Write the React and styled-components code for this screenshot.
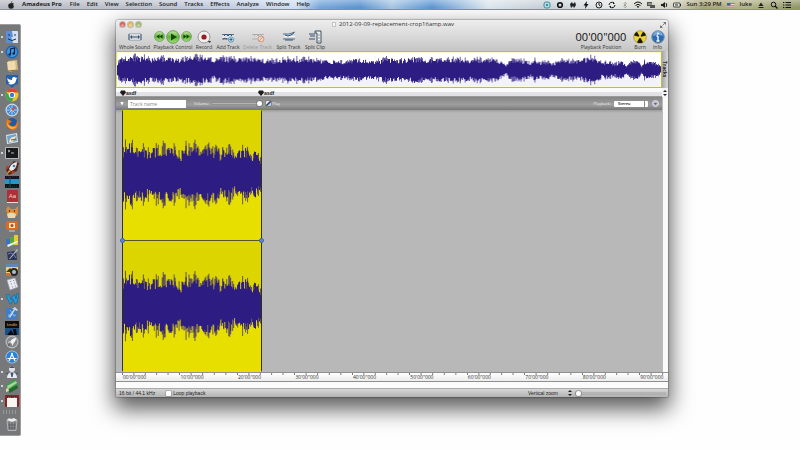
import React, { useState } from 'react';
import styled, { createGlobalStyle } from 'styled-components';

const INK = '#2d1c82';

// small seeded generator so the waves look the same on every load
const seeded = (seed) => {
  let s = seed;
  return () => {
    s = (s * 16807) % 2147483647;
    return s / 2147483647;
  };
};

const envelopeAt = (points, t) => {
  for (let i = 1; i < points.length; i++) {
    if (t <= points[i][0]) {
      const [x0, y0] = points[i - 1];
      const [x1, y1] = points[i];
      return y0 + ((y1 - y0) * (t - x0)) / (x1 - x0);
    }
  }
  return points[points.length - 1][1];
};

const buildWave = (points, width, middle, seed) => {
  const rand = seeded(seed);
  let core = '';
  let peaks = '';
  for (let x = 0; x < width; x++) {
    const env = envelopeAt(points, x);
    const a = env * (0.6 + rand() * 0.38);
    const b = env * (0.6 + rand() * 0.38);
    core += `M${x} ${(middle - a).toFixed(1)}h1V${(middle + b).toFixed(1)}h-1z`;
    if (rand() > 0.5) {
      const p = env * (0.85 + rand() * 0.35);
      peaks += `M${x} ${(middle - p).toFixed(1)}h1V${(middle + p).toFixed(1)}h-1z`;
    }
  }
  return { core, peaks };
};

const overviewPoints = [
  [0, 8], [4, 12], [20, 14], [36, 12], [50, 13], [63, 11], [75, 14], [92, 13], [97, 9], [104, 13],
  [118, 12], [140, 12], [155, 10], [175, 12], [200, 11], [222, 9], [232, 9], [240, 12], [258, 9],
  [270, 12], [285, 11], [298, 13], [310, 11], [335, 12], [360, 11], [380, 12], [386, 8], [390, 4],
  [394, 10], [410, 10], [415, 7], [419, 12], [425, 8], [432, 9], [436, 5], [441, 10], [460, 10],
  [475, 13], [483, 12], [486, 7], [492, 9], [499, 6], [507, 10], [511, 4], [515, 9], [522, 9],
  [526, 4], [529, 9], [538, 8], [543, 6], [546, 3],
];

const clipPoints = [
  [0, 28], [3, 31], [10, 33], [14, 24], [18, 30], [25, 23], [30, 28], [45, 29], [53, 26], [57, 20],
  [61, 30], [75, 29], [84, 28], [96, 27], [98, 16], [99, 30], [102, 24], [108, 26], [112, 18],
  [117, 26], [125, 28], [128, 18], [132, 25], [137, 18], [139, 13],
];

const Wave = ({ points, width, height, middle, seed }) => {
  const { core, peaks } = buildWave(points, width, middle, seed);
  return (
    <WaveSvg viewBox={`0 0 ${width} ${height}`} preserveAspectRatio="none" aria-hidden="true">
      <path d={peaks} fill={INK} opacity="0.7" />
      <path d={core} fill={INK} />
    </WaveSvg>
  );
};

const dockApps = [
  { name: 'Finder', running: true, art: <><rect x="1" y="1" width="12" height="12" rx="1" fill="#5b8fd8" /><path d="M7 1h5a1 1 0 0 1 1 1v11H8C7 10 6.500 9 6.500 7H8z" fill="#d4e0ef" /><path d="M4 4v2M10 4v2M3 9q4 3 8 0" stroke="#16305e" fill="none" /></> },
  { name: 'iTunes', running: true, art: <><circle cx="7" cy="7" r="6.500" fill="#1d66b4" /><circle cx="7" cy="7" r="5" fill="#3f98e0" /><path d="M5.500 9.500V4l4-1v5.500" stroke="#0c2447" fill="none" strokeWidth="1.200" /><circle cx="4.700" cy="9.500" r="1.300" fill="#0c2447" /><circle cx="8.700" cy="8.500" r="1.300" fill="#0c2447" /></> },
  { name: 'Notes', art: <><path d="M3 2l9-1 1 10-9 2z" fill="#d8b981" /><path d="M2 3l8-1 1 9-8 1z" fill="#f0dcae" /><path d="M3 12l9-1" stroke="#8f6d35" /></> },
  { name: 'Twitter', art: <><path d="M1 1h12v9l-3 1-3 3-3-3-3-1z" fill="#2461a8" /><path d="M2 4q2 2 5 2 0-3 2-3 1.500 0 2 1l1.500-.5-1.200 1.700Q11 10 6.500 10.500 4 10.500 3 9.500q2 0 2-.7Q3 8 3 7z" fill="#fff" /></> },
  { name: 'Chrome', running: true, art: <><circle cx="7" cy="7" r="6.500" fill="#efc52d" /><path d="M1.300 3.800A6.500 6.500 0 0 1 13 4.500H7z" fill="#dc4536" /><path d="M1.300 3.800A6.500 6.500 0 0 0 7 13.500L9 9 5 9z" fill="#41a652" /><circle cx="7" cy="7" r="3" fill="#fff" /><circle cx="7" cy="7" r="2.200" fill="#3d79d2" /></> },
  { name: 'Safari', art: <><circle cx="7" cy="7" r="6.500" fill="#cfd8e2" /><circle cx="7" cy="7" r="5.300" fill="#3f8bd6" /><path d="M7 2v10M2 7h10M3.500 3.500l7 7M10.500 3.500l-7 7" stroke="#d5e9fb" strokeWidth=".7" /><path d="M11 3L8 8 6 6z" fill="#d8483a" /></> },
  { name: 'Firefox', art: <><circle cx="7" cy="7" r="6" fill="#2358a3" /><path d="M2 2Q0 7 2 10q3 4 7 3 5-2 4-8l-1-2q0 5-3 6-4 1-5-3l3-1Q5 3 2 2z" fill="#e8781f" /><path d="M2 5q0 5 4 7 4 0 6-3-4 2-7 0Q3 8 2 5z" fill="#f7b532" /></> },
  { name: 'Mail', art: <><path d="M1 3l11-2 1 9-11 2z" fill="#dfe6ec" /><path d="M2 4l9-2 1 7-9 2z" fill="#6da0cf" /><path d="M4 10Q5 5 8 5l3-1-1 3-3 3z" fill="#f0e5bd" /><path d="M6 8l5-1" stroke="#845c35" /></> },
  { name: 'Terminal', running: true, art: <><rect x="0" y="1" width="14" height="12" rx="1" fill="#b6b9bb" /><rect x="1" y="2" width="12" height="10" fill="#17191b" /><path d="M3 4l2 1-2 1M6 7h3" stroke="#e4e4e4" fill="none" strokeWidth=".8" /></> },
  { name: 'Rocket', art: <><path d="M1 9L9 0l5 2-2 8-8 4z" fill="#54261c" /><path d="M12 1Q6 2 4 8l2 2q6-2 6-9z" fill="#eee" /><path d="M4 7L0 8l3-4zM7 10l-1 4 4-4z" fill="#ba3828" /><path d="M4 9l2 1-5 4z" fill="#f08d26" /><circle cx="9" cy="5" r="1.300" fill="#427cb7" /></> },
  { name: 'Movies', art: <><rect y="1" width="14" height="12" fill="#10151b" /><rect y="4" width="14" height="5" fill="#2596c6" /><path d="M5 2v10" stroke="#134d6b" /><path d="M1 2h12M1 12h12" stroke="#2b3238" strokeDasharray="1 1" /></> },
  { name: 'Dictionary', art: <><rect x="2" y="0" width="11" height="13" rx="1" fill="#ac3036" /><path d="M2 12.500h11" stroke="#ecdcd5" /><text x="7.500" y="8" fontSize="6" fontFamily="Liberation Sans, sans-serif" textAnchor="middle" fill="#f3d8ca">Aa</text></> },
  { name: 'Growl', art: <><path d="M1 5l2-4 3 3h4l3-3v7q0 4-6 4-6 0-5-4z" fill="#d78c3a" /><path d="M2 9q4-3 9 0l-1 4H3z" fill="#edd8a6" /><path d="M4 6h1M9 6h1" stroke="#372010" strokeWidth="1.500" /></> },
  { name: 'Library', art: <><rect x="1" y="2" width="12" height="9" rx="1" fill="#d66d26" /><rect x="4" y="4" width="6" height="5" fill="#f3e4c6" /><circle cx="7" cy="6.500" r="1.500" fill="#b14a16" /><path d="M4 12h6" stroke="#d8cdbc" /></> },
  { name: 'Numbers', art: <><path d="M1 5h4v7H1z" fill="#3b73be" /><path d="M5 3h4v9H5z" fill="#55a83e" /><path d="M9 1h4v10H9z" fill="#e8ca32" /><path d="M2 11L12 7l1 1-10 5z" fill="#f4f4f4" /></> },
  { name: 'Inkwell', art: <><path d="M2 4l9-1 1 9H3z" fill="#2c3555" /><path d="M4 11L12 1l1 1-8 9z" fill="#b9bed0" /><path d="M3 6q3-2 5 0t3 4" stroke="#7b84b6" fill="none" /></> },
  { name: 'iPhoto', art: <><rect x="1" y="1" width="12" height="9" fill="#f2cd73" /><path d="M1 1h12v3H1z" fill="#5e89b5" /><path d="M1 9l4-4 4 4z" fill="#463323" /><circle cx="9" cy="9" r="4" fill="#282628" /><circle cx="9" cy="9" r="2" fill="#b7b9d1" /><rect x="1" y="10" width="5" height="3" fill="#c4763a" /></> },
  { name: 'Dice', art: <><path d="M2 3l8-2 3 9-8 3z" fill="#e8e9f1" stroke="#a2a5b5" strokeWidth=".6" /><path d="M5 4.500h1M8 3.500h1M6 7h1M9 6h1M7 10h1M10 9h1" stroke="#8e93ad" strokeWidth="1.200" /></> },
  { name: 'Word', running: true, art: <path d="M1 3l3-1 2 6 2-5h2l1 4 1-6 2 1-2 9-2 1-2-5-2 5H5z" fill="#279cdb" stroke="#155783" strokeWidth=".5" /> },
  { name: 'Xcode', art: <><rect x="1" y="2" width="11" height="11" rx="1" fill="#3c7dc7" /><path d="M3 11L9 4M5 4l5 7M3 9h8" stroke="#8fbdec" strokeWidth=".8" /><path d="M7 3l3-2 3 3-1 1-2-1-5 8-1-1 5-8z" fill="#d4d8de" /></> },
  { name: 'Kindle', art: <><rect width="14" height="14" fill="#0b0d14" /><path d="M0 7h14v7H0z" fill="#1b4f85" /><path d="M2 14l4-5 3 5zM8 8h3l1 6H9z" fill="#050a12" /><text x="7" y="5" fontSize="4" fontFamily="Liberation Sans, sans-serif" textAnchor="middle" fill="#e3a63c">kindle</text></> },
  { name: 'Launchpad', art: <><circle cx="7" cy="7" r="6.500" fill="#b9bdc0" /><circle cx="7" cy="7" r="5.300" fill="#84898d" /><path d="M11 3Q7 3 5 7l2 2q4-2 4-6zM5 6L3 7l1 1zM7 9v2l2-3z" fill="#f2f3f3" /><path d="M4 9l1 1-2 1z" fill="#333" /></> },
  { name: 'App Store', art: <><circle cx="7" cy="7" r="6.500" fill="#aac9e8" /><circle cx="7" cy="7" r="5.700" fill="#2e80d1" /><path d="M4 11l3.500-8M10 11L6.500 3M2.500 8.500h9" stroke="#fff" strokeWidth="1.200" /></> },
  { name: 'Adium', running: true, art: <><path d="M2 13q0-5 5-6 5 1 5 6z" fill="#e8eaf0" /><circle cx="7" cy="4" r="3" fill="#dfe2ea" /><path d="M4 3q3-4 6 0" fill="#45516d" /><path d="M6 8l1 4 1-4zM3 9l-2-1M11 9l2-1" fill="#2f4473" stroke="#2f4473" strokeWidth=".8" /></> },
  { name: 'Textmate', running: true, art: <><path d="M1 6L10 0l3 6-9 7z" fill="#3e9c44" /><path d="M2 7l9-5 1 2-9 6z" fill="#a5d49d" /><path d="M3 11l9-5 1 3-8 5z" fill="#24682d" /><path d="M1 10l2-1 1 3-3 1z" fill="#e4d9ae" /></> },
  { name: 'Amadeus Pro', running: true, art: <><rect x="0" y="1" width="14" height="12" rx="1" fill="#8c2025" /><path d="M2 4q2-1 5 0 3-1 5 0v9H2z" fill="#f8f5f2" /><path d="M2 3h10" stroke="#262626" strokeDasharray="1 1" /></> },
];

const menus = ['File', 'Edit', 'View', 'Selection', 'Sound', 'Tracks', 'Effects', 'Analyze', 'Window', 'Help'];
const ticks = ['00', '10', '20', '30', '40', '50', '60', '70', '80', '90'];

const MenuBar = () => (
  <TopBar>
    <MenuList>
      <AppleButton aria-label="Apple menu">
        <svg width="8" height="8" viewBox="0 0 8 8">
          <path d="M4 2.300Q5.500 1.500 6.800 2.600 5.400 4 7 5.300 6.200 7.900 5 7.700q-1-.5-2 0Q1.500 7.500 1.100 4.800 1.200 1.800 4 2.300zM4 1.900Q4 .5 5.300 0 5.400 1.500 4 1.900z" fill="#222" />
        </svg>
      </AppleButton>
      <MenuButton $strong>Amadeus Pro</MenuButton>
      {menus.map((m) => (
        <MenuButton key={m}>{m}</MenuButton>
      ))}
    </MenuList>
    <StatusList>
      <StatusIcon viewBox="0 0 8 8"><rect x="1" y="1" width="6" height="6" rx="2" fill="#b5dce2" stroke="#45909e" /><path d="M3 3h2v2H3z" fill="#45909e" /></StatusIcon>
      <StatusIcon viewBox="0 0 8 8"><circle cx="4" cy="4" r="2.300" fill="none" stroke="#111" strokeWidth="1.600" /></StatusIcon>
      <StatusIcon viewBox="0 0 8 8"><path d="M1 3l2-2 1 2 2-2 1 3-2 3-1-2-2 2z" fill="#222" /></StatusIcon>
      <StatusIcon viewBox="0 0 8 8"><path d="M5 0L1.500 4.500h2L3 8l3.500-5h-2z" fill="#111" /></StatusIcon>
      <StatusIcon viewBox="0 0 8 8"><circle cx="4" cy="4" r="3" fill="none" stroke="#222" /><path d="M4 2v2l1.500 1" stroke="#222" fill="none" /></StatusIcon>
      <StatusIcon viewBox="0 0 8 8"><path d="M1 4a3 3 0 0 1 5-2M7 4a3 3 0 0 1-5 2" stroke="#111" fill="none" /><path d="M5 1l2 2H5zM3 7L1 5h2z" fill="#111" /></StatusIcon>
      <StatusIcon viewBox="0 0 8 8"><path d="M2.500 2.500l3 3L4 7V1l1.500 1.500-3 3" stroke="#999" fill="none" strokeWidth=".7" /></StatusIcon>
      <StatusIcon viewBox="0 0 8 8"><path d="M0 3q4-4 8 0M1.500 4.500q2.500-2.500 5 0" stroke="#111" fill="none" /><path d="M2.700 5.600q1.300-1 2.600 0L4 7z" fill="#111" /></StatusIcon>
      <StatusIcon viewBox="0 0 8 8"><path d="M0 1h5v4H0zM3 4h5v3H3z" fill="#555" /><path d="M1 3h6" stroke="#ccc" /></StatusIcon>
      <StatusIcon viewBox="0 0 8 8"><path d="M1 3h1.500L5 1v6L2.500 5H1z" fill="#222" /><path d="M6 2q1.500 2 0 4" stroke="#222" fill="none" /></StatusIcon>
      <StatusIcon viewBox="0 0 8 8"><rect x=".5" y="2" width="6.500" height="4" rx=".5" fill="#eee" stroke="#222" strokeWidth=".8" /><path d="M2 4h3M7.500 3v2" stroke="#222" /></StatusIcon>
      <Clock>Sun 3:29 PM</Clock>
      <StatusIcon viewBox="0 0 8 8"><path d="M0 2h8v4.500H0z" fill="#eee" /><path d="M0 2.500h8M0 4.300h8M0 6h8" stroke="#c04a4a" strokeWidth=".8" /><path d="M0 2h3.500v2.500H0z" fill="#4b5c98" /></StatusIcon>
      <Clock>luke</Clock>
      <StatusIcon viewBox="0 0 8 8"><path d="M4 1.500L6.500 5h-5zM1.500 6h5v1h-5z" fill="#222" /></StatusIcon>
      <StatusIcon viewBox="0 0 8 8"><circle cx="3.500" cy="3.500" r="2.300" fill="none" stroke="#111" /><path d="M5 5l2.500 2.500" stroke="#111" strokeWidth="1.300" /></StatusIcon>
      <StatusIcon viewBox="0 0 8 8"><path d="M2.500 1.500H8M2.500 4H8M2.500 6.500H8M0 1.500h1.300M0 4h1.300M0 6.500h1.300" stroke="#111" /></StatusIcon>
    </StatusList>
  </TopBar>
);

const Dock = () => (
  <DockBar aria-label="Dock">
    {dockApps.map((app) => (
      <DockButton key={app.name} aria-label={app.name} $running={app.running}>
        <svg width="14" height="14" viewBox="0 0 14 14">{app.art}</svg>
      </DockButton>
    ))}
    <DockDivider />
    <DockButton aria-label="Trash">
      <svg width="14" height="14" viewBox="0 0 14 14">
        <path d="M2 3h10l-1 10.500H3z" fill="#8e9193" stroke="#c3c6c8" strokeWidth=".7" />
        <path d="M4 5l1 8M7 5v8M10 5l-1 8M3 8h8M3 11h8" stroke="#54585a" strokeWidth=".7" />
        <path d="M2 3q2-3 4-1l3-1 3 2-5 2z" fill="#eceded" />
      </svg>
    </DockButton>
  </DockBar>
);

const PlayGlyph = ({ size, children }) => (
  <svg width={size} height={size} viewBox="0 0 14 14">
    <defs>
      <linearGradient id="green" x2="0" y2="1">
        <stop offset="0" stopColor="#c4e8a8" />
        <stop offset=".5" stopColor="#62b53c" />
        <stop offset="1" stopColor="#a0e274" />
      </linearGradient>
    </defs>
    <circle cx="7" cy="7" r="6.300" fill="url(#green)" stroke="#6f9a5c" />
    {children}
  </svg>
);

const Toolbar = () => (
  <ToolbarRow>
    <Tool $width={37}>
      <ToolButton aria-labelledby="t-whole">
        <svg width="14" height="12" viewBox="0 0 14 12"><path d="M1 3v6M13 3v6" stroke="#4a5d7b" strokeWidth="1.200" /><path d="M3 6h8" stroke="#34507c" strokeWidth="1" /><path d="M4 4L2 6l2 2zM10 4l2 2-2 2z" fill="#34507c" /><path d="M1 2.500h12M1 9.500h12" stroke="#9aa7b8" strokeWidth=".7" /></svg>
      </ToolButton>
      <ToolLabel id="t-whole">Whole Sound</ToolLabel>
    </Tool>
    <Tool $width={40}>
      <ButtonGroup>
        <ToolButton aria-label="Rewind"><PlayGlyph size={11}><path d="M7 4v6L3 7zM11 4v6L7 7z" fill="#164b0a" /></PlayGlyph></ToolButton>
        <ToolButton aria-label="Play"><PlayGlyph size={14}><path d="M5 3.500v7L11 7z" fill="#164b0a" /></PlayGlyph></ToolButton>
        <ToolButton aria-label="Forward"><PlayGlyph size={11}><path d="M7 4v6l4-3zM3 4v6l4-3z" fill="#164b0a" /></PlayGlyph></ToolButton>
      </ButtonGroup>
      <ToolLabel>Playback Control</ToolLabel>
    </Tool>
    <Tool $width={22}>
      <ToolButton aria-labelledby="t-rec">
        <svg width="14" height="14" viewBox="0 0 14 14"><circle cx="7" cy="7" r="6" fill="#f1eeee" stroke="#9b9696" /><circle cx="7" cy="7" r="2.600" fill="#951f25" /><path d="M11 11h3l-1.500 2z" fill="#222" /></svg>
      </ToolButton>
      <ToolLabel id="t-rec">Record</ToolLabel>
    </Tool>
    <Tool $width={26}>
      <ToolButton aria-labelledby="t-add">
        <svg width="14" height="14" viewBox="0 0 14 14"><path d="M1 4.500h12M1 9h8" stroke="#5e7186" /><path d="M3 6l2-2 2 2 2-2 2 2M2 9l2-1 2 1" stroke="#28547d" fill="none" /><path d="M1 7h12" stroke="#f6f8fa" /><circle cx="10" cy="9.500" r="2.700" fill="#cae2ee" stroke="#4a86ac" strokeWidth=".8" /><path d="M10 8v3M8.500 9.500h3" stroke="#28618c" /></svg>
      </ToolButton>
      <ToolLabel id="t-add">Add Track</ToolLabel>
    </Tool>
    <Tool $width={33}>
      <ToolButton aria-labelledby="t-del" disabled>
        <svg width="14" height="14" viewBox="0 0 14 14"><path d="M1 4.500h12M1 9h6" stroke="#b0b2b4" /><path d="M3 6l2-2 2 2 2-2 2 2" stroke="#aaa" fill="none" /><circle cx="10" cy="9" r="3" fill="#e9d5ca" stroke="#d69a80" /><path d="M8 11l4-4" stroke="#d69a80" /></svg>
      </ToolButton>
      <ToolLabel id="t-del" $dim>Delete Track</ToolLabel>
    </Tool>
    <Tool $width={29}>
      <ToolButton aria-labelledby="t-split">
        <svg width="14" height="14" viewBox="0 0 14 14"><path d="M1 4h6l6-2M1 9h12" stroke="#55738e" fill="none" /><path d="M2 6.500h11" stroke="#f5f8fa" /><path d="M3 5l3 1 3-1 3-2M3 10h8" stroke="#28547d" fill="none" /></svg>
      </ToolButton>
      <ToolLabel id="t-split">Split Track</ToolLabel>
    </Tool>
    <Tool $width={24}>
      <ToolButton aria-labelledby="t-clip">
        <svg width="14" height="14" viewBox="0 0 14 14"><path d="M1 4h6M1 9h6M2 6h5" stroke="#34516e" strokeWidth="1.200" /><path d="M7 1h6v12H9V3H7z" fill="#edf0f2" stroke="#3f4d5c" /><path d="M10 5h2M10 8h2M11 10v2" stroke="#8a9aa8" /></svg>
      </ToolButton>
      <ToolLabel id="t-clip">Split Clip</ToolLabel>
    </Tool>
    <Spacer />
    <Tool $width={60}>
      <Counter>00'00"000</Counter>
      <ToolLabel>Playback Position</ToolLabel>
    </Tool>
    <Tool $width={18}>
      <ToolButton aria-labelledby="t-burn">
        <svg width="14" height="14" viewBox="0 0 14 14"><circle cx="7" cy="7" r="6.300" fill="#ecd43b" stroke="#9b8e3b" strokeWidth=".7" /><path d="M7 7L1 5.500A6 6 0 0 1 4 1.800zM7 7l3-5.200a6 6 0 0 1 3 3.700zM7 7l3 5.200a6 6 0 0 1-6 0z" fill="#18170f" /><circle cx="7" cy="7" r="1.200" fill="#ecd43b" /></svg>
      </ToolButton>
      <ToolLabel id="t-burn">Burn</ToolLabel>
    </Tool>
    <Tool $width={17}>
      <ToolButton aria-labelledby="t-info">
        <svg width="14" height="14" viewBox="0 0 14 14"><circle cx="7" cy="7" r="6.200" fill="#2b6bb4" stroke="#74899f" /><path d="M2 6a5 5 0 0 1 10 0q-5-2-10 0z" fill="#77a7da" /><path d="M7 6v5M5.500 6H7M5.500 11h3" stroke="#fff" strokeWidth="1.300" /><circle cx="7" cy="3.600" r="1" fill="#fff" /></svg>
      </ToolButton>
      <ToolLabel id="t-info">Info</ToolLabel>
    </Tool>
  </ToolbarRow>
);

const Marker = ({ children, first }) => (
  <MarkerItem $first={first}>
    <svg width="6" height="6" viewBox="0 0 6 6"><path d="M1 .5h4L6 2.500 3 6 0 2.500z" fill="#1c1c1c" /></svg>
    {children}
  </MarkerItem>
);

const Stepper = () => (
  <svg width="4" height="8" viewBox="0 0 4 8"><path d="M2 1l2 2H0zM2 7L0 5h4z" fill="#222" /></svg>
);

export default function App() {
  const [trackName, setTrackName] = useState('');
  const [volume, setVolume] = useState(100);
  const [play, setPlay] = useState(true);
  const [loop, setLoop] = useState(false);
  const [zoom, setZoom] = useState(0);

  return (
    <>
      <GlobalStyle />
      <Desktop>
        <MenuBar />
        <Workspace>
          <Dock />
          <Window>
            <TitleBar>
              <Lights>
                <Light aria-label="Close" $color="#d8564f" />
                <Light aria-label="Minimize" $color="#e6b14a" />
                <Light aria-label="Zoom" $color="#8fbc55" />
              </Lights>
              <Title><DocIcon />2012-09-09-replacement-crop16amp.wav</Title>
              <FullScreen aria-label="Full screen">
                <svg width="6" height="6" viewBox="0 0 6 6"><path d="M3 0h3v3zM0 3v3h3z" fill="#777" /><path d="M1 5l4-4" stroke="#777" strokeDasharray="2 1" /></svg>
              </FullScreen>
            </TitleBar>
            <Toolbar />
            <OverviewRow>
              <Overview>
                <Wave points={overviewPoints} width={546} height={35} middle={18} seed={77} />
              </Overview>
              <TracksTab>Tracks</TracksTab>
            </OverviewRow>
            <MarkerRow>
              <MarkerStrip>
                <Marker first>asdf</Marker>
                <Marker>asdf</Marker>
              </MarkerStrip>
              <Stepper />
            </MarkerRow>
            <EditorRow>
              <TrackArea>
                <TrackHeader>
                  <Disclosure aria-label="Collapse track" />
                  <NameInput aria-label="Track name" placeholder="Track name" value={trackName} onChange={(e) => setTrackName(e.target.value)} />
                  <HeaderLabel htmlFor="volume">Volume:</HeaderLabel>
                  <Slider id="volume" type="range" value={volume} $width="50px" onChange={(e) => setVolume(Number(e.target.value))} />
                  <PlayLabel>
                    <CheckBox type="checkbox" checked={play} onChange={(e) => setPlay(e.target.checked)} />
                    Play
                  </PlayLabel>
                  <Spacer />
                  <HeaderLabel htmlFor="playback">Playback:</HeaderLabel>
                  <OutputSelect id="playback" defaultValue="Stereo">
                    <option>Stereo</option>
                    <option>Mono</option>
                  </OutputSelect>
                  <GearButton aria-label="Track options">
                    <svg width="7" height="7" viewBox="0 0 7 7"><circle cx="3.500" cy="3.500" r="3" fill="#b9bcc7" stroke="#e3e4ea" strokeWidth=".8" /><path d="M2 3l1.500 2L5 3z" fill="#555c73" /></svg>
                  </GearButton>
                </TrackHeader>
                <TrackCanvas>
                  <Clip>
                    <Channel><Wave points={clipPoints} width={139} height={131} middle={65} seed={4211} /></Channel>
                    <Handles><Handle /><Handle /></Handles>
                    <Channel><Wave points={clipPoints} width={139} height={131} middle={65} seed={4211} /></Channel>
                  </Clip>
                </TrackCanvas>
              </TrackArea>
              <VerticalScroll />
            </EditorRow>
            <Ruler>
              {ticks.map((t) => (
                <Tick key={t}>{t}'00"000</Tick>
              ))}
            </Ruler>
            <HorizontalScroll />
            <StatusBar>
              <span>16 bit / 44.1 kHz</span>
              <LoopLabel>
                <CheckBox type="checkbox" checked={loop} onChange={(e) => setLoop(e.target.checked)} />
                Loop playback
              </LoopLabel>
              <Spacer />
              <label htmlFor="zoom">Vertical zoom</label>
              <ZoomControl>
                <Stepper />
                <Slider id="zoom" type="range" value={zoom} $width="89px" onChange={(e) => setZoom(Number(e.target.value))} />
              </ZoomControl>
            </StatusBar>
          </Window>
        </Workspace>
      </Desktop>
    </>
  );
}

const GlobalStyle = createGlobalStyle`
  * {
    box-sizing: border-box;
  }

  body {
    margin: 0;
    background: #fefefe;
    font-family: "Open Sans", "Noto Sans", sans-serif;
    font-size: 5px;
    line-height: 7px;
    color: #222;
  }

  button, input, select {
    font: inherit;
    color: inherit;
    margin: 0;
    padding: 0;
    border: 0;
    background: none;
  }

  svg {
    display: block;
    flex: none;
  }
`;

const Desktop = styled.div`
  min-height: 100vh;
  overflow: hidden;
`;

const TopBar = styled.header`
  display: flex;
  justify-content: space-between;
  align-items: center;
  height: 10px;
  padding: 0 9px 0 7px;
  background:
    linear-gradient(rgba(255, 255, 255, 0.35), rgba(255, 255, 255, 0) 80%),
    linear-gradient(90deg, #b9bbc4 0, #bfc3ce 17%, #c6d3e8 30%, #d3e2f4 37%, #7aa9dc 40%, #5f96d2 45%, #a9c8e6 49%, #5e98d4 54%, #dfe8ef 61%, #c9d2d8 68%, #e6e9e8 76%, #d5d5c4 84%, #a5a377 88%, #b5b388 93%, #8f9766 100%);
  border-bottom: 1px solid #8b8f98;
  font-size: 6px;
  line-height: 9px;
`;

const MenuList = styled.nav`
  display: flex;
  gap: 7px;
`;

const AppleButton = styled.button`
  width: 8px;
`;

const MenuButton = styled.button`
  font-weight: ${(props) => (props.$strong ? 700 : 600)};
  margin-right: ${(props) => (props.$strong ? '1px' : '0')};
  white-space: nowrap;
`;

const StatusList = styled.div`
  display: flex;
  align-items: center;
  gap: 5px;
`;

const StatusIcon = styled.svg`
  width: 8px;
  height: 8px;
`;

const Clock = styled.span`
  font-weight: 600;
`;

const Workspace = styled.div`
  display: flex;
  align-items: flex-start;
  gap: 95px;
  padding: 10px 132px 0 0;
`;

const DockBar = styled.nav`
  display: flex;
  flex-direction: column;
  justify-content: space-between;
  flex: none;
  width: 21px;
  height: 412px;
  margin-top: 4px;
  padding: 5px 0 4px;
  background: #777879;
  border: 1px solid #9d9d9d;
  border-left: 0;
  border-radius: 0 2px 2px 0;
`;

const DockButton = styled.button`
  display: flex;
  align-items: center;
  gap: 2px;
  height: 14px;
  padding-left: 1px;

  &::before {
    content: '';
    width: 2px;
    height: 2px;
    border-radius: 50%;
    background: ${(props) => (props.$running ? '#e8f4ff' : 'transparent')};
  }
`;

const DockDivider = styled.div`
  height: 4px;
  margin: 2px 3px;
  background: repeating-linear-gradient(90deg, #999 0 1px, #777 1px 3px);
`;

const Window = styled.main`
  flex: 1;
  min-width: 0;
  border-radius: 3px 3px 1px 1px;
  background: linear-gradient(#eeeeee, #c4c4c4 32px);
  box-shadow: 0 0 1px 1px rgba(0, 0, 0, 0.2), 0 10px 22px 2px rgba(0, 0, 0, 0.65);
`;

const TitleBar = styled.div`
  display: grid;
  grid-template-columns: 40px 1fr 40px;
  align-items: center;
  height: 9px;
  padding: 0 2px 0 4px;
`;

const Lights = styled.div`
  display: flex;
  gap: 3px;
`;

const Light = styled.button`
  width: 5px;
  height: 5px;
  border-radius: 50%;
  background: radial-gradient(circle at 50% 70%, #fff8, transparent 60%), ${(props) => props.$color};
  box-shadow: 0 0 0 1px rgba(80, 60, 50, 0.25);
`;

const Title = styled.h1`
  display: flex;
  align-items: center;
  justify-content: center;
  gap: 3px;
  margin: 0;
  font-size: 6px;
  line-height: 9px;
  font-weight: 400;
  color: #333;
`;

const DocIcon = styled.span`
  width: 4px;
  height: 5px;
  background: #f8f8f8;
  border: 1px solid #c4c4c4;
`;

const FullScreen = styled.button`
  justify-self: end;
`;

const ToolbarRow = styled.div`
  display: flex;
  height: 22px;
  padding: 0 2px 0 0;
`;

const Tool = styled.div`
  display: flex;
  flex-direction: column;
  align-items: center;
  flex: none;
  width: ${(props) => props.$width}px;
`;

const ToolButton = styled.button`
  display: flex;
  align-items: center;
  height: 15px;
`;

const ButtonGroup = styled.div`
  display: flex;
  gap: 1px;
`;

const ToolLabel = styled.span`
  white-space: nowrap;
  line-height: 6px;
  color: ${(props) => (props.$dim ? '#999' : '#333')};
`;

const Counter = styled.output`
  font-size: 11px;
  line-height: 15px;
  color: #111;
`;

const Spacer = styled.div`
  flex: 1;
`;

const OverviewRow = styled.div`
  display: flex;
  height: 37px;
`;

const Overview = styled.div`
  flex: 1;
  border: 1px solid #b9b95c;
  border-left-color: #dede8a;
  background: linear-gradient(#ffffff 50%, #f2f2fa 50%);
  box-shadow: inset 0 0 0 1px #fbfbd2;
`;

const WaveSvg = styled.svg`
  width: 100%;
  height: 100%;
`;

const TracksTab = styled.button`
  width: 6px;
  writing-mode: vertical-rl;
  text-align: center;
  font-weight: 700;
  line-height: 6px;
  background: linear-gradient(90deg, #a7a7a7, #d9d9d9);
`;

const MarkerRow = styled.div`
  display: flex;
  align-items: center;
  gap: 1px;
  height: 9px;
  padding-right: 1px;
  background: #f4f4f4;
`;

const MarkerStrip = styled.div`
  display: flex;
  align-items: flex-start;
  flex: 1;
  height: 9px;
  padding: 2px 0 0 4px;
  background: linear-gradient(#fbfbfb 50%, #e1e1e6 50%);
  border-bottom: 1px solid #999;
`;

const MarkerItem = styled.span`
  display: flex;
  align-items: center;
  width: ${(props) => (props.$first ? '138px' : 'auto')};
  height: 6px;
  font-family: "Liberation Sans", sans-serif;
  font-weight: 700;
  line-height: 5px;
`;

const EditorRow = styled.div`
  display: flex;
`;

const TrackArea = styled.section`
  flex: 1;
`;

const TrackHeader = styled.div`
  display: flex;
  align-items: center;
  height: 13px;
  padding: 0 3px 0 4px;
  background: linear-gradient(#858585, #9e9e9e 60%, #777777);
  color: #eeeeee;
  font-size: 4px;
`;

const Disclosure = styled.button`
  width: 4px;
  height: 4px;
  margin-right: 4px;
  background: #fff;
  clip-path: polygon(0 0, 100% 0, 50% 100%);
`;

const NameInput = styled.input`
  width: 58px;
  height: 8px;
  margin-right: 8px;
  padding: 0 2px;
  background: #fff;
  color: #333;
  font-size: 5px;
  line-height: 8px;

  &::placeholder {
    color: #888;
  }
`;

const HeaderLabel = styled.label`
  margin-right: 3px;
`;

const Slider = styled.input`
  appearance: none;
  width: ${(props) => props.$width};
  height: 6px;

  &::-webkit-slider-runnable-track {
    height: 1px;
    background: #b5b5b5;
    box-shadow: 0 0 0 1px rgba(90, 90, 90, 0.15);
  }

  &::-webkit-slider-thumb {
    appearance: none;
    width: 5px;
    height: 5px;
    margin-top: -2px;
    border-radius: 50%;
    background: #fff;
    box-shadow: 0 0 0 1px rgba(90, 90, 90, 0.4);
  }
`;

const PlayLabel = styled.label`
  display: flex;
  align-items: center;
  gap: 1px;
  margin-left: 4px;
`;

const CheckBox = styled.input`
  appearance: none;
  width: 5px;
  height: 5px;
  border-radius: 1px;
  background: #fff;
  box-shadow: 0 0 0 1px rgba(80, 80, 80, 0.25);

  &:checked {
    background: linear-gradient(135deg, #dfe9f8 30%, #24365c 50%, #b8cbea 70%);
  }
`;

const OutputSelect = styled.select`
  appearance: none;
  width: 34px;
  height: 6px;
  margin-right: 4px;
  padding: 0 4px;
  border-radius: 1px;
  background: linear-gradient(90deg, #fff 88%, #888 88%, #888 92%, #fff 92%);
  color: #111;
  font-weight: 600;
  line-height: 6px;
`;

const GearButton = styled.button`
  height: 7px;
`;

const TrackCanvas = styled.div`
  padding-left: 6px;
  background: linear-gradient(rgba(0, 0, 0, 0.15), transparent 3px), #b8b8b8;
`;

const Clip = styled.div`
  display: flex;
  flex-direction: column;
  width: 140px;
  border: solid #33320c;
  border-width: 0 1px;
  border-radius: 2px;
`;

const Channel = styled.div`
  height: 130px;
  background: linear-gradient(#dcd500 50%, #e7df00 50%);

  &:last-child {
    height: 131px;
  }
`;

/* fade line with a grip at each end */
const Handles = styled.div`
  display: flex;
  justify-content: space-between;
  align-items: center;
  height: 1px;
  margin: 0 -3px;
  z-index: 1;
  background: #55552f;
`;

const Handle = styled.span`
  width: 5px;
  height: 5px;
  border-radius: 50%;
  background: #5b88e6;
  border: 1px solid #3d62b8;
`;

const VerticalScroll = styled.div`
  width: 6px;
  border-left: 1px solid #bbb;
  background: #fafafa;
`;

const Ruler = styled.div`
  display: grid;
  grid-template-columns: repeat(9, 2fr) 1fr;
  height: 10px;
  padding-left: 6px;
  border: solid #8f8f8f;
  border-width: 1px 0;
  background: linear-gradient(#ffffff, #ececec);
`;

const Tick = styled.span`
  border-left: 1px solid transparent;
  line-height: 9px;
  background: linear-gradient(90deg, #777 1px, transparent 1px) 0 0 / 20% 2px repeat-x border-box;
  color: #333;

  &:last-child {
    background-size: 40% 2px;
  }
`;

const HorizontalScroll = styled.div`
  height: 6px;
  background: #fbfbfb;
`;

const StatusBar = styled.footer`
  display: flex;
  align-items: center;
  height: 9px;
  padding: 0 3px;
  border-top: 1px solid #aaa;
  background: linear-gradient(#d6d6d6, #b2b2b2);
  font-family: "Liberation Sans", sans-serif;
`;

const LoopLabel = styled.label`
  display: flex;
  align-items: center;
  gap: 2px;
  margin-left: 11px;
`;

const ZoomControl = styled.div`
  display: flex;
  align-items: center;
  gap: 4px;
  margin-left: 10px;
`;
